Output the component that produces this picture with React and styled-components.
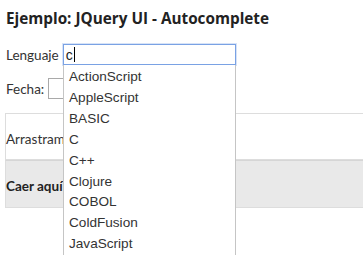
import React from 'react'
import styled, { createGlobalStyle } from 'styled-components'

const GlobalStyle = createGlobalStyle`
  html, body {
    margin: 0;
    padding: 0;
    background: #fff;
    overflow: hidden;
  }
  body {
    font-family: Lato, "Open Sans", sans-serif;
    color: #222;
  }
`

const Page = styled.div`
  position: relative;
  box-sizing: border-box;
  padding: 9px 0 0 5px;
  width: 400px;
  min-height: 100vh;
`

const Title = styled.h3`
  margin: 0 0 16px 1px;
  font-family: "Open Sans", "Noto Sans", sans-serif;
  font-size: 15.3px;
  font-weight: 700;
  line-height: 19px;
  color: #222;
`

const Field = styled.div`
  display: flex;
  align-items: center;
  gap: ${props => props.gap}px;
  margin-left: 1px;
  margin-bottom: ${props => props.after}px;
  font-size: 13.5px;
  color: #333;
  height: 21px;
`

const TextBox = styled.div`
  position: relative;
  box-sizing: border-box;
  width: ${props => props.width}px;
  height: 21px;
  border: 1px solid ${props => (props.focused ? '#7aa2e4' : '#a9a9a9')};
  box-shadow: ${props => (props.focused ? '0 0 0 1px rgba(122,162,228,0.3)' : 'none')};
  padding: 0 2px;
  display: flex;
  align-items: center;
  font-family: "Liberation Sans", Arial, sans-serif;
  font-size: 14px;
  color: #222;
`

const Caret = styled.span`
  display: inline-block;
  width: 1px;
  height: 15px;
  background: #000;
  margin-left: 1px;
`

const Menu = styled.ul`
  position: absolute;
  left: 63px;
  top: 65px;
  width: 173px;
  box-sizing: border-box;
  margin: 0;
  padding: 2px 0 0;
  list-style: none;
  background: #fff;
  border: 1px solid #c5c5c5;
  border-top: none;
  font-family: "Liberation Sans", Arial, sans-serif;
  font-size: 13.6px;
  color: #333;
  z-index: 10;
`

const MenuItem = styled.li`
  padding: 3px 12px 3px 5px;
  line-height: 14.9px;
  white-space: nowrap;
`

const DragBox = styled.div`
  box-sizing: border-box;
  height: 47px;
  border: 1px solid #dddddd;
  display: flex;
  align-items: center;
  padding-top: 5px;
  font-size: 13.5px;
  color: #333;
`

const DropBox = styled.div`
  box-sizing: border-box;
  height: 48px;
  background: #e9e9e9;
  border: 1px solid #dddddd;
  border-top-color: #d6d6d6;
  display: flex;
  align-items: center;
  padding-top: 4px;
  font-size: 13.5px;
  font-weight: 700;
  color: #222;
`

const languages = [
  'ActionScript',
  'AppleScript',
  'BASIC',
  'C',
  'C++',
  'Clojure',
  'COBOL',
  'ColdFusion',
  'JavaScript',
  'Lisp',
]

export default function App () {
  return (
    <Page>
      <GlobalStyle />
      <Title>Ejemplo: JQuery UI - Autocomplete</Title>
      <Field gap={4} after={13}>
        <span>Lenguaje</span>
        <TextBox width={173} focused>
          c<Caret />
        </TextBox>
      </Field>
      <Field gap={4} after={14}>
        <span>Fecha:</span>
        <TextBox width={150} />
      </Field>
      <DragBox>Arrastrame</DragBox>
      <DropBox>Caer aquí</DropBox>
      <Menu>
        {languages.map(l => (
          <MenuItem key={l}>{l}</MenuItem>
        ))}
      </Menu>
    </Page>
  )
}
